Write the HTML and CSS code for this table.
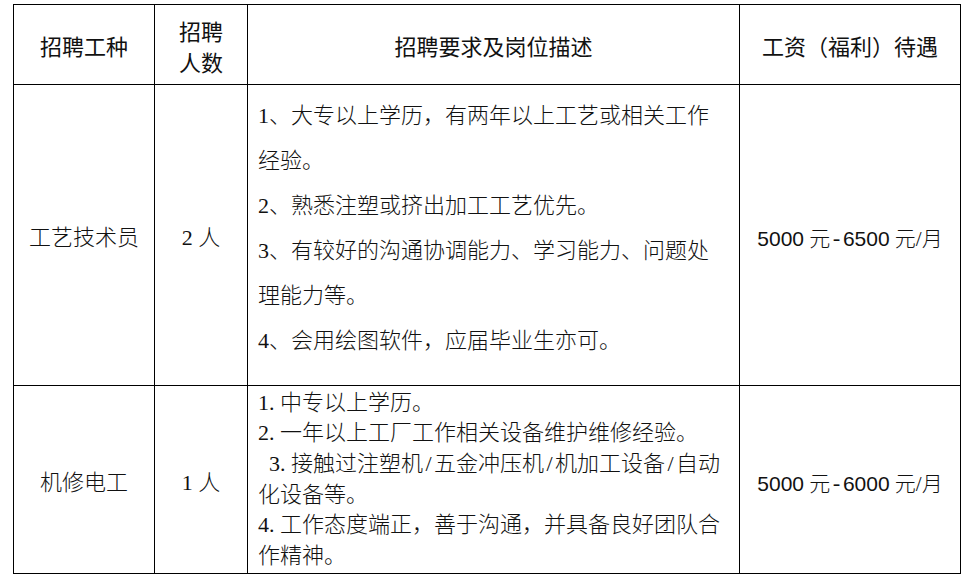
FILE: index.html
```html
<!DOCTYPE html>
<html lang="zh-CN">
<head>
<meta charset="utf-8">
<title>招聘</title>
<link rel="stylesheet" href="styles.css">
</head>
<body>
<div class="page">
<table class="jobs">
  <colgroup>
    <col class="c-type">
    <col class="c-num">
    <col class="c-desc">
    <col class="c-pay">
  </colgroup>
  <thead>
    <tr class="row-head">
      <th>招聘工种</th>
      <th class="two-line">招聘<br>人数</th>
      <th>招聘要求及岗位描述</th>
      <th>工资（福利）待遇</th>
    </tr>
  </thead>
  <tbody>
    <tr class="row-a">
      <td class="center">工艺技术员</td>
      <td class="center">2 人</td>
      <td class="desc desc-wide">
        <p>1、大专以上学历，有两年以上工艺或相关工作经验。</p>
        <p>2、熟悉注塑或挤出加工工艺优先。</p>
        <p>3、有较好的沟通协调能力、学习能力、问题处理能力等。</p>
        <p>4、会用绘图软件，应届毕业生亦可。</p>
      </td>
      <td class="center pay"><span class="num">5000</span> 元<span class="dash">-</span><span class="num">6500</span> 元/月</td>
    </tr>
    <tr class="row-b">
      <td class="center">机修电工</td>
      <td class="center">1 人</td>
      <td class="desc desc-tight">
        <p><span class="idx">1.</span>中专以上学历。</p>
        <p><span class="idx">2.</span>一年以上工厂工作相关设备维护维修经验。</p>
        <p class="indent"><span class="idx">3.</span>接触过注塑机<span class="sl">/</span>五金冲压机<span class="sl">/</span>机加工设备<span class="sl">/</span>自动<br>化设备等。</p>
        <p><span class="idx">4.</span>工作态度端正，善于沟通，并具备良好团队合<br>作精神。</p>
      </td>
      <td class="center pay"><span class="num">5000</span> 元<span class="dash">-</span><span class="num">6000</span> 元/月</td>
    </tr>
  </tbody>
</table>
</div>
</body>
</html>
```
FILE: styles.css
```css
html, body {
  margin: 0;
  padding: 0;
  background: #ffffff;
}

.page {
  padding: 4px 0 0 13px;
}

.jobs {
  border-collapse: collapse;
  table-layout: fixed;
  width: 947px;
  color: #111111;
  font-family: "Liberation Serif", "Noto Sans CJK SC", serif;
  font-size: 22px;
}

.c-type { width: 141px; }
.c-num { width: 93px; }
.c-desc { width: 492px; }
.c-pay { width: 221px; }

.jobs th,
.jobs td {
  border: 1px solid #000000;
  padding: 0;
}

.jobs th {
  font-family: "Noto Sans CJK SC", sans-serif;
  font-weight: 400;
  text-align: center;
  vertical-align: middle;
  line-height: 31px;
  padding-top: 2px;
}

.row-head { height: 80px; }
.row-a { height: 301px; }
.row-b { height: 188px; }

.center {
  text-align: center;
  vertical-align: middle;
  font-weight: 300;
}

.desc {
  font-weight: 300;
  text-align: left;
}

.desc p {
  margin: 0;
}

.desc-wide {
  vertical-align: top;
  padding: 8px 14px 0 10px !important;
  line-height: 45px;
}

.desc-tight {
  vertical-align: middle;
  padding: 0 8px 0 10px !important;
  line-height: 30.6px;
  white-space: nowrap;
}

.desc-tight .idx {
  display: inline-block;
  width: 22px;
  text-indent: 0;
}

.desc-tight .sl {
  display: inline-block;
  width: 11px;
  text-align: center;
  text-indent: 0;
}

.desc-tight .indent {
  text-indent: 11px;
}

.pay {
  padding-top: 4px !important;
  font-size: 21px;
}

.pay .num {
  font-family: "Liberation Sans", sans-serif;
  font-weight: 400;
}

.pay .dash {
  font-family: "Liberation Mono", monospace;
}
```
